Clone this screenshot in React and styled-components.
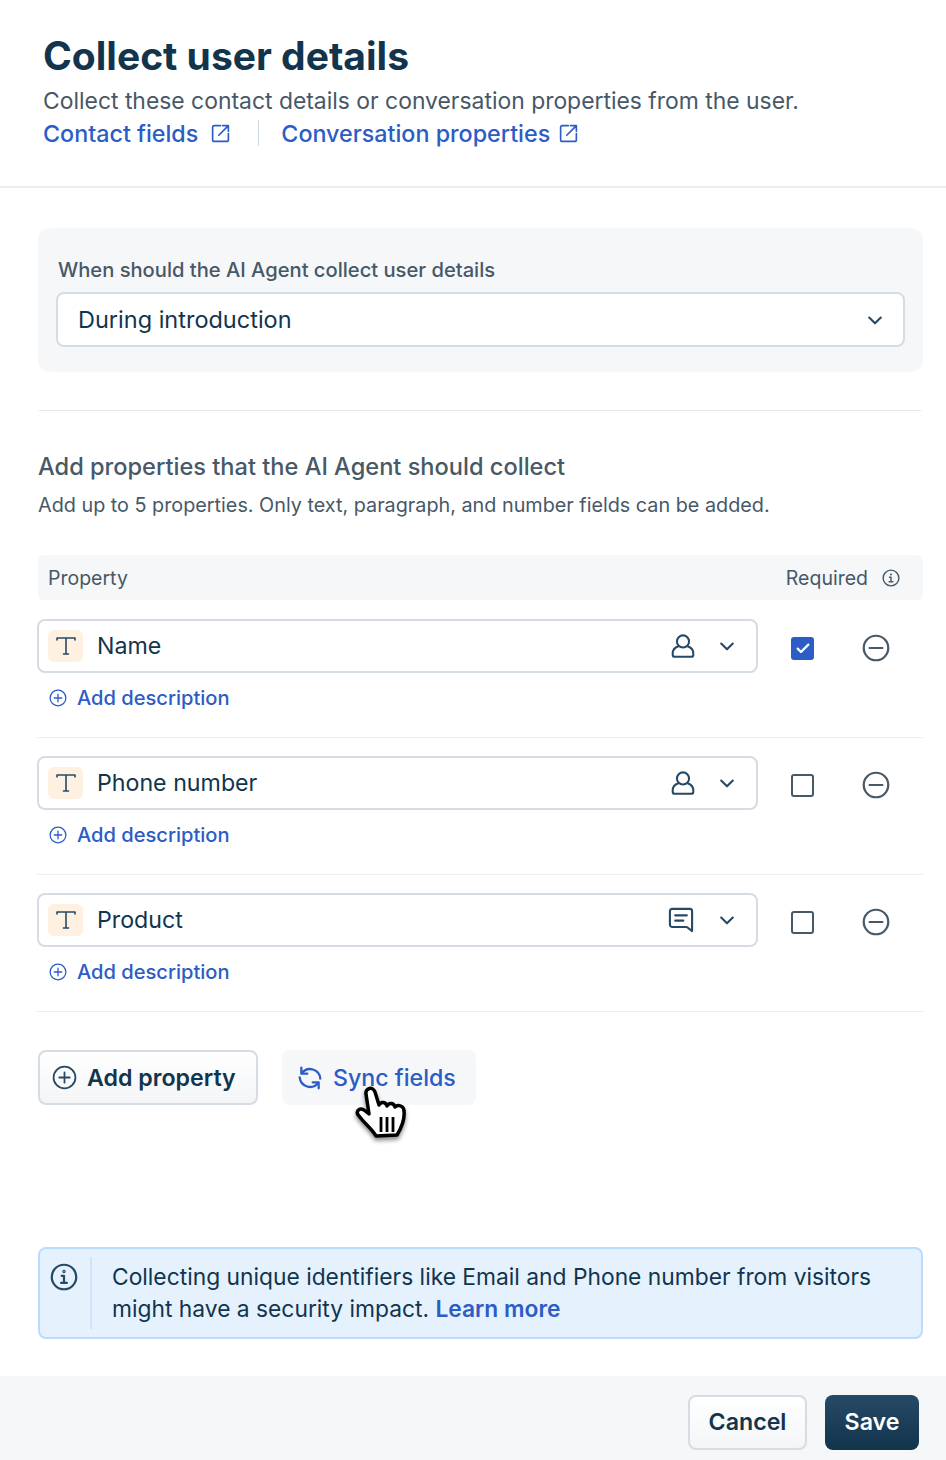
import React from 'react';
import styled, { createGlobalStyle } from 'styled-components';

const GlobalStyle = createGlobalStyle`
  html, body {
    margin: 0;
    padding: 0;
    background: #fff;
    font-family: Inter, "Liberation Sans", sans-serif;
    color: #12344d;
  }
  * { box-sizing: border-box; }
`;

const Page = styled.div`
  width: 946px;
  height: 1460px;
  display: flex;
  flex-direction: column;
  overflow: hidden;
`;

const Header = styled.header`
  height: 188px;
  padding: 33px 20px 0 43px;
  border-bottom: 2px solid #ebeff3;
`;

const Title = styled.h1`
  margin: 0;
  font-size: 39px;
  line-height: 46px;
  font-weight: 700;
  color: #12344d;
`;

const Subtitle = styled.p`
  margin: 7px 0 0;
  font-size: 22.9px;
  line-height: 30px;
  color: #475867;
`;

const LinkRow = styled.div`
  display: flex;
  align-items: center;
  margin-top: 2px;
  height: 30px;
`;

const HeaderLink = styled.a`
  display: flex;
  align-items: center;
  gap: ${p => p.$gap}px;
  font-size: 23.3px;
  font-weight: 500;
  color: #2c5cc5;
`;

const LinkDivider = styled.span`
  width: 1px;
  height: 26px;
  background: #cfd7df;
  margin: 0 22px 0 27px;
`;

const Body = styled.main`
  flex: 1;
  padding: 40px 23px 0 38px;
  display: flex;
  flex-direction: column;
`;

const TimingCard = styled.section`
  height: 144px;
  background: #f5f7f9;
  border-radius: 12px;
  padding: 29px 18px 0 18px;
`;

const TimingLabel = styled.div`
  font-size: 20.15px;
  line-height: 26px;
  font-weight: 500;
  color: #475867;
  margin-left: 2px;
`;

const SelectBox = styled.div`
  display: flex;
  align-items: center;
  height: 55px;
  background: #fff;
  border: 2px solid #d5dce4;
  border-radius: 8px;
  padding: 0 18px 0 20px;
  font-size: 23.5px;
  color: #12344d;
`;

const TimingSelect = styled(SelectBox)`
  margin-top: 9px;
`;

const Grow = styled.span`
  flex: 1;
`;

const Rule = styled.hr`
  height: 1px;
  border: 0;
  margin: 38px 2px 0 1px;
  background: #e3e8ed;
`;

const SectionTitle = styled.h2`
  margin: 42px 0 0;
  font-size: 23.6px;
  line-height: 28px;
  font-weight: 500;
  color: #475867;
`;

const SectionHint = styled.p`
  margin: 10px 0 0;
  font-size: 19.8px;
  line-height: 28px;
  color: #475867;
`;

const TableHead = styled.div`
  display: flex;
  align-items: center;
  height: 45px;
  margin: 36px 0 1px;
  padding: 0 23px 0 10px;
  background: #f5f7f9;
  border-radius: 6px;
  font-size: 19.5px;
  color: #475867;
`;

const RequiredHead = styled.span`
  display: flex;
  align-items: center;
  gap: 14px;
`;

const PropertyRow = styled.div`
  display: grid;
  grid-template-columns: 721px 1fr;
  height: 137px;
  padding-top: 18px;
  margin-left: -1px;
  border-bottom: 1px solid #ebeff3;
`;

const RowLeft = styled.div`
  display: flex;
  flex-direction: column;
`;

const TypeBadge = styled.span`
  display: flex;
  align-items: center;
  justify-content: center;
  width: 35px;
  height: 32px;
  border-radius: 6px;
  background: #fef1e1;
  margin-right: 14px;
`;

const PropertySelect = styled(SelectBox)`
  height: 54px;
  padding: 0 19px 0 9px;
  font-size: 23.2px;
`;

const KindIcon = styled.span`
  display: flex;
  margin-right: ${p => p.$gap}px;
`;

const AddDescription = styled.a`
  display: flex;
  align-items: center;
  gap: 10px;
  margin: 11px 0 0 12px;
  font-size: 20.1px;
  line-height: 28px;
  font-weight: 500;
  color: #2c5cc5;
`;

const RowControls = styled.div`
  display: flex;
  align-items: center;
  height: 58px;
  padding-left: 33px;
  gap: 48px;
`;

const Checkbox = styled.span`
  display: flex;
  align-items: center;
  justify-content: center;
  width: 23px;
  height: 23px;
  border-radius: 3px;
  background: ${p => (p.$checked ? '#2c5cc5' : '#fff')};
  border: 2px solid ${p => (p.$checked ? '#2c5cc5' : '#475867')};
`;

const ButtonRow = styled.div`
  position: relative;
  display: flex;
  margin-top: 38px;
  gap: 24px;
`;

const SecondaryButton = styled.button`
  display: flex;
  align-items: center;
  gap: 10px;
  height: 55px;
  width: 220px;
  padding: 0 0 0 12px;
  border: 2px solid #d5dce4;
  border-radius: 8px;
  background: linear-gradient(180deg, #fff, #f3f5f7);
  font: 600 23.2px Inter, sans-serif;
  color: #12344d;
`;

const GhostButton = styled.button`
  display: flex;
  align-items: center;
  gap: 10px;
  height: 55px;
  width: 194px;
  padding: 0 0 0 15px;
  border: 0;
  border-radius: 8px;
  background: #f5f7f9;
  font: 500 23.2px Inter, sans-serif;
  color: #2c5cc5;
`;

const HandCursor = styled.svg`
  position: absolute;
  left: 312px;
  top: 32px;
  filter: drop-shadow(0 3px 2px rgba(0, 0, 0, 0.45));
`;

const Notice = styled.aside`
  display: flex;
  height: 92px;
  margin-top: 142px;
  border: 2px solid #bbdcfe;
  border-radius: 8px;
  background: #e5f2fd;
  padding: 8px 0 8px 10px;
`;

const NoticeIcon = styled.span`
  display: block;
  width: 42px;
  border-right: 2px solid #cde4fa;
  padding-top: 6px;
`;

const NoticeText = styled.p`
  margin: 0 0 0 20px;
  font-size: 22.8px;
  line-height: 32px;
  color: #12344d;
  padding-top: 4px;
`;

const NoticeLink = styled.a`
  font-weight: 600;
  color: #2c5cc5;
`;

const Footer = styled.footer`
  height: 84px;
  background: #f5f7f9;
  display: flex;
  align-items: center;
  justify-content: flex-end;
  gap: 18px;
  padding: 8px 27px 0 0;
  flex-shrink: 0;
`;

const CancelButton = styled.button`
  width: 119px;
  height: 55px;
  border: 2px solid #d5dce4;
  border-radius: 8px;
  background: linear-gradient(180deg, #fff, #f3f5f7);
  font: 600 23.2px Inter, sans-serif;
  color: #12344d;
`;

const SaveButton = styled.button`
  width: 94px;
  height: 55px;
  border: 0;
  border-radius: 8px;
  background: linear-gradient(180deg, #264966, #12344d);
  font: 600 23.2px Inter, sans-serif;
  color: #fff;
`;

const Icon = ({ size = 24, color = '#12344d', width = 2, children }) => (
  <svg width={size} height={size} viewBox="0 0 24 24" fill="none" stroke={color} strokeWidth={width} strokeLinecap="round" strokeLinejoin="round">
    {children}
  </svg>
);

const ExternalIcon = () => (
  <Icon size={21} color="#2c5cc5" width={1.9}>
    <path d="M12 3H5a2 2 0 0 0-2 2v14a2 2 0 0 0 2 2h14a2 2 0 0 0 2-2v-7" />
    <path d="M10 14L21 3M14.5 3H21v6.5" />
  </Icon>
);

const ChevronIcon = () => (
  <Icon size={20} color="#264966" width={2.5}>
    <path d="M5 9l7 7 7-7" />
  </Icon>
);

const InfoIcon = ({ size, color, width }) => (
  <Icon size={size} color={color} width={width}>
    <circle cx="12" cy="12" r="10.5" />
    <path d="M10 11h2v6M9.5 17h5" />
    <circle cx="12" cy="7.3" r="0.5" />
  </Icon>
);

const PlusCircle = ({ size, color, width }) => (
  <Icon size={size} color={color} width={width}>
    <circle cx="12" cy="12" r="10.5" />
    <path d="M12 7v10M7 12h10" />
  </Icon>
);

const MinusCircle = () => (
  <Icon size={28} color="#475867" width={1.9}>
    <circle cx="12" cy="12" r="10.5" />
    <path d="M6.5 12h11" />
  </Icon>
);

const UserIcon = () => (
  <Icon size={26} color="#264966" width={1.9}>
    <circle cx="12" cy="7.8" r="5.6" />
    <path d="M7.8 12.2C4.500 13.300 2.500 15.800 2.500 18.800V20a2 2 0 0 0 2 2h15a2 2 0 0 0 2-2v-1.200c0-3-2-5.500-5.300-6.600" />
  </Icon>
);

const ChatIcon = () => (
  <Icon size={28} color="#264966" width={1.8}>
    <path d="M4.500 2.500h15a2 2 0 0 1 2 2v17l-4.500-3.500H4.500a2 2 0 0 1-2-2V4.500a2 2 0 0 1 2-2z" />
    <path d="M7 8h10M7 12.500h7" />
  </Icon>
);

const TypeIcon = () => (
  <Icon size={24} color="#264966" width={1.6}>
    <path d="M3 6V4h18v2M12 4v16M9.500 20h5" />
  </Icon>
);

const SyncIcon = () => (
  <Icon size={26} color="#2c5cc5" width={2.1}>
    <path d="M4.500 7.500A9.500 9.500 0 0 1 21.500 12.500" />
    <path d="M4 2.500V8h5.500" />
    <path d="M19.500 16.500A9.500 9.500 0 0 1 2.500 11.500" />
    <path d="M20 21.500V16h-5.500" />
  </Icon>
);

const properties = [
  { name: 'Name', kind: 'user', required: true },
  { name: 'Phone number', kind: 'user', required: false },
  { name: 'Product', kind: 'chat', required: false },
];

function App() {
  return (
    <Page>
      <GlobalStyle />
      <Header>
        <Title>Collect user details</Title>
        <Subtitle>Collect these contact details or conversation properties from the user.</Subtitle>
        <LinkRow>
          <HeaderLink $gap={12}>Contact fields <ExternalIcon /></HeaderLink>
          <LinkDivider />
          <HeaderLink $gap={8}>Conversation properties <ExternalIcon /></HeaderLink>
        </LinkRow>
      </Header>

      <Body>
        <TimingCard>
          <TimingLabel>When should the AI Agent collect user details</TimingLabel>
          <TimingSelect>
            <Grow>During introduction</Grow>
            <ChevronIcon />
          </TimingSelect>
        </TimingCard>

        <Rule />

        <SectionTitle>Add properties that the AI Agent should collect</SectionTitle>
        <SectionHint>Add up to 5 properties. Only text, paragraph, and number fields can be added.</SectionHint>

        <TableHead>
          <Grow>Property</Grow>
          <RequiredHead>
            Required
            <InfoIcon size={18} color="#475867" width={1.9} />
          </RequiredHead>
        </TableHead>

        {properties.map(p => (
          <PropertyRow key={p.name}>
            <RowLeft>
              <PropertySelect>
                <TypeBadge><TypeIcon /></TypeBadge>
                <Grow>{p.name}</Grow>
                {p.kind === 'user'
                  ? <KindIcon $gap={21}><UserIcon /></KindIcon>
                  : <KindIcon $gap={22}><ChatIcon /></KindIcon>}
                <ChevronIcon />
              </PropertySelect>
              <AddDescription>
                <PlusCircle size={18} color="#2c5cc5" width={1.7} />
                Add description
              </AddDescription>
            </RowLeft>
            <RowControls>
              <Checkbox $checked={p.required}>
                {p.required && (
                  <Icon size={16} color="#fff" width={3.4}>
                    <path d="M4 13l5 5L20 7" />
                  </Icon>
                )}
              </Checkbox>
              <MinusCircle />
            </RowControls>
          </PropertyRow>
        ))}

        <ButtonRow>
          <SecondaryButton>
            <PlusCircle size={25} color="#264966" width={1.7} />
            Add property
          </SecondaryButton>
          <GhostButton>
            <SyncIcon />
            Sync fields
          </GhostButton>
          <HandCursor width="64" height="64" viewBox="0 0 64 64">
            <path d="M16 12C15 6 23 4 25 10L29 23C31 19 36 20 37 24C39 20 44 21 45 25C48 22 54 24 54 29C55 38 52 45 47 53L26 54C22 47 15 42 9 34C5 30 9 25 14 28L19 32Z" fill="#fff" stroke="#000" strokeWidth="3.5" strokeLinejoin="round" />
            <path d="M31 35v15M37 35v15M43 35v15" stroke="#000" strokeWidth="2.800" />
          </HandCursor>
        </ButtonRow>

        <Notice>
          <NoticeIcon><InfoIcon size={28} color="#264966" width={1.9} /></NoticeIcon>
          <NoticeText>
            Collecting unique identifiers like Email and Phone number from visitors
            <br />
            might have a security impact. <NoticeLink>Learn more</NoticeLink>
          </NoticeText>
        </Notice>
      </Body>

      <Footer>
        <CancelButton>Cancel</CancelButton>
        <SaveButton>Save</SaveButton>
      </Footer>
    </Page>
  );
}

export default App;
